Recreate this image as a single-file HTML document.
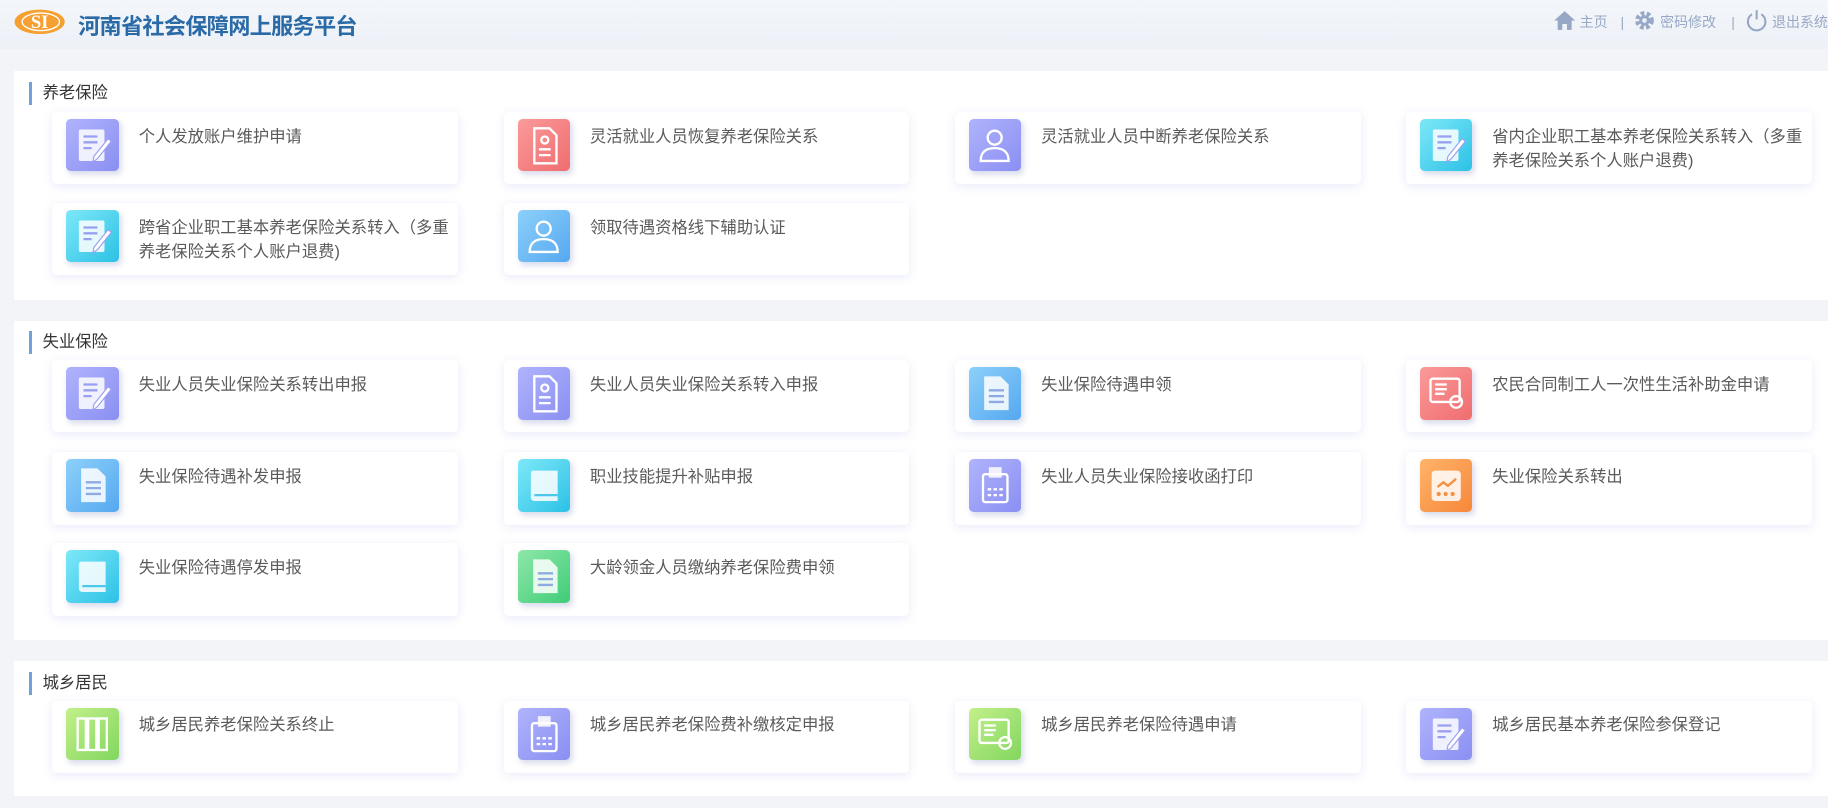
<!DOCTYPE html>
<html><head><meta charset="utf-8">
<style>
*{margin:0;padding:0;box-sizing:border-box}
html,body{width:1828px;height:808px;overflow:hidden;background:#f2f4f7}
#w{zoom:1.16582;width:1568px;height:693px;position:relative;font-family:"Liberation Sans","Noto Sans CJK SC",sans-serif;background:#f2f4f7;overflow:hidden}
.hd{position:absolute;left:0;top:0;width:1568px;height:42px;background:linear-gradient(180deg,#f3f6fa,#edf1f7)}
.logo{position:absolute;left:12px;top:8px;width:44px;height:22px}
.title{position:absolute;left:67px;top:8px;font-size:19px;font-weight:bold;color:#2a6aa6;letter-spacing:-0.6px;font-family:"Noto Sans CJK SC",sans-serif}
.nav{position:absolute;top:10px;font-size:12px;color:#97a8c6;line-height:18px}
.panel{position:absolute;left:12px;width:1570px;background:#fff}
.pt{position:absolute;left:13px;top:9px;height:20px;border-left:3px solid #6ea2d8;padding-left:9px;font-size:14px;line-height:20px;color:#333}
.card{position:absolute;width:348px;height:62px;background:#fff;border-radius:4px;box-shadow:0 2px 8px rgba(120,130,220,.16)}
.ic{position:absolute;left:12px;top:6px;width:45px;height:45px;border-radius:4px;box-shadow:2px 3px 5px rgba(100,110,180,.25)}
.ic svg{position:absolute;left:0;top:0}
.tx{position:absolute;left:74px;top:11px;width:268px;font-size:14px;line-height:21px;color:#5a5a5a}
.pu{background:linear-gradient(135deg,#b0b3fb,#8a8ff2)}
.re{background:linear-gradient(135deg,#fb9a9a,#ef6d6f)}
.cy{background:linear-gradient(135deg,#7ee8f8,#2cc1e6)}
.bl{background:linear-gradient(135deg,#8dd0fa,#55a8f0)}
.or{background:linear-gradient(135deg,#ffb46a,#f6873a)}
.gr{background:linear-gradient(135deg,#8ee8a8,#3fcc78)}
.lg{background:linear-gradient(135deg,#c3f08a,#82d660)}
</style></head><body><div id="w">
<div class="hd">
<svg class="logo" viewBox="0 0 44 22"><ellipse cx="22" cy="11" rx="21.5" ry="10.5" fill="#f5a030"/><ellipse cx="23" cy="11" rx="16" ry="7.5" fill="none" stroke="#fff" stroke-width="1.2"/><text x="22" y="16.5" text-anchor="middle" font-family="Liberation Serif" font-weight="bold" font-size="16" fill="#fff">SI</text></svg>
<div class="title">河南省社会保障网上服务平台</div>
<svg style="position:absolute;left:1332px;top:9px" width="20" height="18" viewBox="0 0 20 18"><path d="M10 1L1 9h3v8h4v-5h4v5h4V9h3z" fill="#97a8c6"/></svg>
<div class="nav" style="left:1355px">主页</div>
<div class="nav" style="left:1390px">|</div>
<svg style="position:absolute;left:1402px;top:9px" width="18" height="18" viewBox="0 0 18 18"><circle cx="9" cy="9" r="6" fill="none" stroke="#97a8c6" stroke-width="4" stroke-dasharray="3 2"/><circle cx="9" cy="9" r="4.5" fill="#97a8c6"/><circle cx="9" cy="9" r="2" fill="#eef2f8"/></svg>
<div class="nav" style="left:1424px">密码修改</div>
<div class="nav" style="left:1485px">|</div>
<svg style="position:absolute;left:1497px;top:8px" width="20" height="20" viewBox="0 0 20 20"><path d="M6 4.5A7.5 7.5 0 1 0 14 4.5" fill="none" stroke="#97a8c6" stroke-width="1.8"/><path d="M10 1v8" stroke="#97a8c6" stroke-width="1.8"/></svg>
<div class="nav" style="left:1520px">退出系统</div>
</div>

<svg width="0" height="0" style="position:absolute">
<defs>
<g id="pen"><rect x="11" y="9" width="22" height="27" rx="1.5" fill="rgba(255,255,255,.85)"/><path d="M15 15h12M15 20h12M15 25h7" stroke="#9aa0f0" stroke-width="2"/><path d="M36 17l-12 15-1 5 4-3 12-15z" fill="#fff" stroke="#9aa0f0" stroke-width="1"/></g>
<g id="doc"><path d="M13 8h14l7 7v22H13z" fill="rgba(255,255,255,.85)"/><path d="M17 20h13M17 25h13M17 30h13" stroke="rgba(120,150,220,.8)" stroke-width="2"/></g>
<g id="per"><path d="M14 8h13l6 6v24H14z" fill="none" stroke="#fff" stroke-width="2"/><circle cx="23" cy="18" r="3" fill="none" stroke="#fff" stroke-width="2"/><path d="M18 26h10M18 31h10" stroke="#fff" stroke-width="2"/></g>
<g id="usr"><circle cx="22" cy="16" r="6" fill="none" stroke="#fff" stroke-width="2"/><path d="M10 36c0-8 5-11 12-11s12 3 12 11z" fill="none" stroke="#fff" stroke-width="2"/></g>
<g id="book"><path d="M12 10h22v26H14a3 3 0 0 1-3-3V12" fill="rgba(255,255,255,.85)"/><path d="M14 31h20" stroke="#4cc8ea" stroke-width="2"/></g>
<g id="calc"><rect x="12" y="13" width="21" height="24" rx="2" fill="none" stroke="#fff" stroke-width="2"/><rect x="17" y="7" width="11" height="9" fill="rgba(255,255,255,.85)"/><path d="M16 26h3M21 26h3M26 26h3M16 31h3M21 31h3M26 31h3" stroke="#fff" stroke-width="2"/></g>
<g id="chart"><rect x="10" y="10" width="25" height="26" rx="3" fill="rgba(255,255,255,.85)"/><path d="M15 24l5-4 4 3 7-6" fill="none" stroke="#f6903f" stroke-width="2"/><circle cx="16" cy="30" r="1.8" fill="#f6903f"/><circle cx="22" cy="30" r="1.8" fill="#f6903f"/><circle cx="28" cy="30" r="1.8" fill="#f6903f"/></g>
<g id="col"><rect x="10" y="9" width="7" height="27" fill="none" stroke="#fff" stroke-width="2"/><rect x="19" y="9" width="7" height="27" fill="none" stroke="#fff" stroke-width="2"/><rect x="28" y="9" width="7" height="27" fill="none" stroke="#fff" stroke-width="2"/></g>
<g id="bill"><rect x="9" y="10" width="25" height="20" rx="2" fill="none" stroke="#fff" stroke-width="2"/><path d="M13 15h10M13 19h10M13 23h8" stroke="#fff" stroke-width="2"/><circle cx="31" cy="30" r="5" fill="none" stroke="#fff" stroke-width="2"/></g>
</defs></svg>

<div class="panel" style="top:61px;height:196px">
<div class="pt">养老保险</div>
<div class="card" style="left:33px;top:35px"><div class="ic pu"><svg width="45" height="45"><use href="#pen"/></svg></div><div class="tx">个人发放账户维护申请</div></div>
<div class="card" style="left:420px;top:35px"><div class="ic re"><svg width="45" height="45"><use href="#per"/></svg></div><div class="tx">灵活就业人员恢复养老保险关系</div></div>
<div class="card" style="left:807px;top:35px"><div class="ic pu"><svg width="45" height="45"><use href="#usr"/></svg></div><div class="tx">灵活就业人员中断养老保险关系</div></div>
<div class="card" style="left:1194px;top:35px"><div class="ic cy"><svg width="45" height="45"><use href="#pen"/></svg></div><div class="tx">省内企业职工基本养老保险关系转入（多重养老保险关系个人账户退费)</div></div>
<div class="card" style="left:33px;top:113px"><div class="ic cy"><svg width="45" height="45"><use href="#pen"/></svg></div><div class="tx">跨省企业职工基本养老保险关系转入（多重养老保险关系个人账户退费)</div></div>
<div class="card" style="left:420px;top:113px"><div class="ic bl"><svg width="45" height="45"><use href="#usr"/></svg></div><div class="tx">领取待遇资格线下辅助认证</div></div>
</div>

<div class="panel" style="top:275px;height:274px">
<div class="pt">失业保险</div>
<div class="card" style="left:33px;top:34px"><div class="ic pu"><svg width="45" height="45"><use href="#pen"/></svg></div><div class="tx">失业人员失业保险关系转出申报</div></div>
<div class="card" style="left:420px;top:34px"><div class="ic pu"><svg width="45" height="45"><use href="#per"/></svg></div><div class="tx">失业人员失业保险关系转入申报</div></div>
<div class="card" style="left:807px;top:34px"><div class="ic bl"><svg width="45" height="45"><use href="#doc"/></svg></div><div class="tx">失业保险待遇申领</div></div>
<div class="card" style="left:1194px;top:34px"><div class="ic re"><svg width="45" height="45"><use href="#bill"/></svg></div><div class="tx">农民合同制工人一次性生活补助金申请</div></div>
<div class="card" style="left:33px;top:113px"><div class="ic bl"><svg width="45" height="45"><use href="#doc"/></svg></div><div class="tx">失业保险待遇补发申报</div></div>
<div class="card" style="left:420px;top:113px"><div class="ic cy"><svg width="45" height="45"><use href="#book"/></svg></div><div class="tx">职业技能提升补贴申报</div></div>
<div class="card" style="left:807px;top:113px"><div class="ic pu"><svg width="45" height="45"><use href="#calc"/></svg></div><div class="tx">失业人员失业保险接收函打印</div></div>
<div class="card" style="left:1194px;top:113px"><div class="ic or"><svg width="45" height="45"><use href="#chart"/></svg></div><div class="tx">失业保险关系转出</div></div>
<div class="card" style="left:33px;top:191px"><div class="ic cy"><svg width="45" height="45"><use href="#book"/></svg></div><div class="tx">失业保险待遇停发申报</div></div>
<div class="card" style="left:420px;top:191px"><div class="ic gr"><svg width="45" height="45"><use href="#doc"/></svg></div><div class="tx">大龄领金人员缴纳养老保险费申领</div></div>
</div>

<div class="panel" style="top:567px;height:116px">
<div class="pt">城乡居民</div>
<div class="card" style="left:33px;top:34px"><div class="ic lg"><svg width="45" height="45"><use href="#col"/></svg></div><div class="tx">城乡居民养老保险关系终止</div></div>
<div class="card" style="left:420px;top:34px"><div class="ic pu"><svg width="45" height="45"><use href="#calc"/></svg></div><div class="tx">城乡居民养老保险费补缴核定申报</div></div>
<div class="card" style="left:807px;top:34px"><div class="ic lg"><svg width="45" height="45"><use href="#bill"/></svg></div><div class="tx">城乡居民养老保险待遇申请</div></div>
<div class="card" style="left:1194px;top:34px"><div class="ic pu"><svg width="45" height="45"><use href="#pen"/></svg></div><div class="tx">城乡居民基本养老保险参保登记</div></div>
</div>
</div></body></html>
